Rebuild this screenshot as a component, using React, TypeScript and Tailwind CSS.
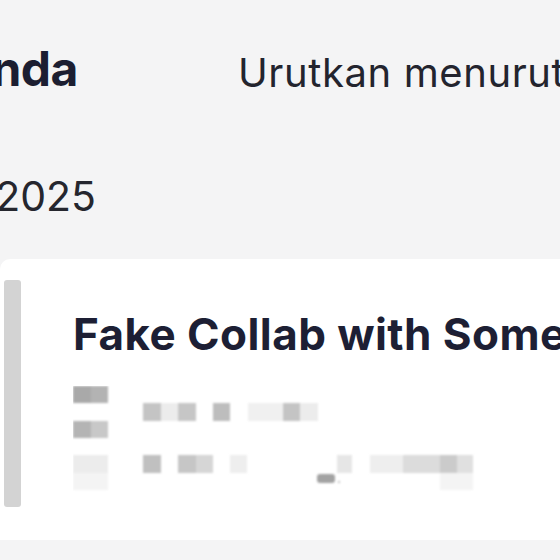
import React from 'react';

const font = { fontFamily: 'Inter, "Noto Sans", sans-serif' };

type Cell = [number, number, number, number, string];

// pixelated (redacted) meta lines under the title
const cells: Cell[] = [
  [0, 0, 18, 17, '#a9a9a9'],
  [18, 0, 17, 17, '#b3b3b3'],
  [70, 17, 18, 18, '#c4c4c4'],
  [88, 17, 17, 18, '#ececec'],
  [105, 17, 18, 18, '#c6c6c6'],
  [140, 17, 17, 18, '#bdbdbd'],
  [175, 17, 35, 18, '#f0f0f0'],
  [210, 17, 17, 18, '#c4c4c4'],
  [227, 17, 18, 18, '#ececec'],
  [0, 35, 18, 17, '#b4b4b4'],
  [18, 35, 17, 17, '#c8c8c8'],
  [0, 69, 35, 18, '#ececec'],
  [70, 69, 18, 18, '#c0c0c0'],
  [105, 69, 18, 18, '#c6c6c6'],
  [123, 69, 17, 18, '#d6d6d6'],
  [157, 69, 17, 18, '#eeeeee'],
  [264, 69, 15, 18, '#e6e6e6'],
  [297, 69, 33, 18, '#eeeeee'],
  [330, 69, 37, 18, '#dcdcdc'],
  [367, 69, 17, 18, '#cbcbcb'],
  [384, 69, 16, 18, '#e0e0e0'],
  [0, 87, 35, 17, '#f4f4f4'],
  [367, 87, 33, 17, '#f4f4f4'],
];

function Mosaic() {
  return (
    <svg width="410" height="106" viewBox="0 0 410 106" className="block">
      <defs>
        <filter id="soft" x="-5%" y="-5%" width="110%" height="110%">
          <feGaussianBlur stdDeviation="0.8" />
        </filter>
      </defs>
      <g filter="url(#soft)">
        {cells.map(([x, y, w, h, c], i) => (
          <rect key={i} x={x} y={y} width={w} height={h} fill={c} />
        ))}
        <rect x="244" y="88" width="18" height="9" rx="3" fill="#a3a3a3" />
        <circle cx="266" cy="96" r="1" fill="#b0b0b0" />
      </g>
    </svg>
  );
}

export default function App() {
  return (
    <div className="w-[560px] h-[560px] overflow-hidden bg-[#f4f4f5] flex flex-col" style={font}>
      {/* Header */}
      <div className="flex items-end h-[93px] shrink-0">
        <div className="w-[78px] flex justify-end overflow-hidden shrink-0">
          <span className="whitespace-nowrap text-[48px] leading-none font-bold text-[#1c1e31] tracking-[-0.01em]">
            Kampanye Anda
          </span>
        </div>
        <span className="ml-[160px] whitespace-nowrap text-[40px] leading-none text-[#23242e] tracking-[0.015em]">
          Urutkan menurut
        </span>
      </div>

      {/* Date group */}
      <div className="flex mt-[83px] shrink-0">
        <div className="w-[96px] flex justify-end overflow-hidden shrink-0">
          <span className="whitespace-nowrap text-[41px] leading-none text-[#25262e]">
            Januari 2025
          </span>
        </div>
      </div>

      {/* Card */}
      <div className="mt-[42px] h-[281px] bg-white rounded-tl-[10px] flex shrink-0">
        <div className="ml-[4px] mt-[21px] w-[17px] h-[227px] rounded-[3px] bg-[#d3d3d3] shrink-0" />
        <div className="ml-[52px] flex flex-col">
          <div className="mt-[53px] whitespace-nowrap text-[44px] leading-none font-bold text-[#1d1f34] tracking-[0.01em]">
            Fake Collab with Someone
          </div>
          <div className="mt-[30px]">
            <Mosaic />
          </div>
        </div>
      </div>
    </div>
  );
}
